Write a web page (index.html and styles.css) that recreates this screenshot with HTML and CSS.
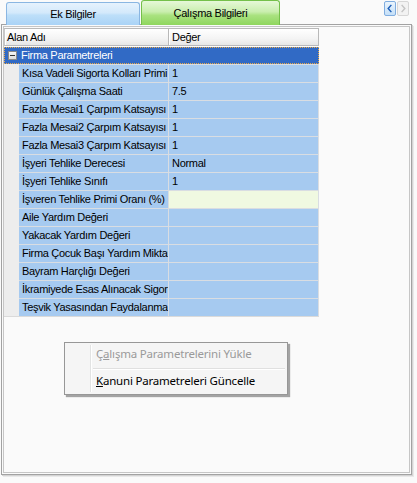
FILE: index.html
```html
<!DOCTYPE html>
<html lang="tr">
<head>
<meta charset="utf-8">
<title>Çalışma Bilgileri</title>
<link rel="stylesheet" href="styles.css">
</head>
<body>
<div class="tabstrip">
  <div class="tab tab-blue">Ek Bilgiler</div>
  <div class="tab tab-green">Çalışma Bilgileri</div>
  <div class="navs">
    <span class="nav nav-on"><svg width="11" height="13" viewBox="0 0 11 13"><path d="M7 2.5 L3.5 6.5 L7 10.5" fill="none" stroke="#1d5fb8" stroke-width="1.6"/></svg></span>
    <span class="nav nav-off"><svg width="11" height="13" viewBox="0 0 11 13"><path d="M4 2.5 L7.5 6.5 L4 10.5" fill="none" stroke="#c4c4c4" stroke-width="1.6"/></svg></span>
  </div>
</div>
<div class="panel">
  <div class="inner">
    <div class="grid">
      <div class="hdr">
        <div class="hcell hname">Alan Adı</div>
        <div class="hcell hval">Değer</div>
      </div>
      <div class="group">
        <span class="expander"></span>
        <span class="gtext">Firma Parametreleri</span>
      </div>
      <div class="row"><div class="ind"></div><div class="c name">Kısa Vadeli Sigorta Kolları Primi</div><div class="c val">1</div></div>
      <div class="row"><div class="ind"></div><div class="c name">Günlük Çalışma Saati</div><div class="c val">7.5</div></div>
      <div class="row"><div class="ind"></div><div class="c name">Fazla Mesai1 Çarpım Katsayısı</div><div class="c val">1</div></div>
      <div class="row"><div class="ind"></div><div class="c name">Fazla Mesai2 Çarpım Katsayısı</div><div class="c val">1</div></div>
      <div class="row"><div class="ind"></div><div class="c name">Fazla Mesai3 Çarpım Katsayısı</div><div class="c val">1</div></div>
      <div class="row"><div class="ind"></div><div class="c name">İşyeri Tehlike Derecesi</div><div class="c val">Normal</div></div>
      <div class="row"><div class="ind"></div><div class="c name">İşyeri Tehlike Sınıfı</div><div class="c val">1</div></div>
      <div class="row row-cur"><div class="ind"></div><div class="c name">İşveren Tehlike Primi Oranı (%)</div><div class="c val"></div></div>
      <div class="row"><div class="ind"></div><div class="c name">Aile Yardım Değeri</div><div class="c val"></div></div>
      <div class="row"><div class="ind"></div><div class="c name">Yakacak Yardım Değeri</div><div class="c val"></div></div>
      <div class="row"><div class="ind"></div><div class="c name">Firma Çocuk Başı Yardım Miktarı</div><div class="c val"></div></div>
      <div class="row"><div class="ind"></div><div class="c name">Bayram Harçlığı Değeri</div><div class="c val"></div></div>
      <div class="row"><div class="ind"></div><div class="c name">İkramiyede Esas Alınacak Sigorta Primi</div><div class="c val"></div></div>
      <div class="row"><div class="ind"></div><div class="c name">Teşvik Yasasından Faydalanma Oranı</div><div class="c val"></div></div>
    </div>
  </div>
</div>
<div class="menu">
  <div class="mitem first disabled">Ç<u>a</u>lışma Parametrelerini Yükle</div>
  <div class="msep"></div>
  <div class="mitem"><u>K</u>anuni Parametreleri Güncelle</div>
</div>
</body>
</html>
```
FILE: styles.css
```css
* { box-sizing: border-box; }
html, body { margin: 0; padding: 0; }
body {
  width: 417px;
  height: 483px;
  background: #fafafa;
  font-family: "Liberation Sans", Arial, sans-serif;
  font-size: 11px;
  letter-spacing: -0.3px;
  color: #000;
  position: relative;
  overflow: hidden;
}
.tabstrip {
  display: flex;
  align-items: flex-end;
  height: 25px;
  padding-left: 6px;
  position: relative;
  z-index: 2;
}
.tab {
  display: flex;
  align-items: center;
  justify-content: center;
  border-radius: 3px 3px 0 0;
  padding-bottom: 1px;
}
.tab-blue {
  width: 134px;
  height: 23px;
  border: 1px solid #8ab6e2;
  border-bottom: none;
  background: linear-gradient(#e6f2fd 0%, #d3e9fb 45%, #bddff9 55%, #aad3f6 100%);
}
.tab-green {
  width: 139px;
  height: 25px;
  margin-left: 1px;
  border: 1px solid #74c04a;
  border-bottom: none;
  background: linear-gradient(#e6f8d8 0%, #c9eeae 45%, #a9e27f 60%, #8fd65e 100%);
}
.navs {
  margin-left: auto;
  margin-right: 8px;
  align-self: flex-start;
  margin-top: 1px;
  display: flex;
  gap: 1px;
}
.nav {
  width: 12px;
  height: 15px;
  display: flex;
  align-items: center;
  justify-content: center;
  border-radius: 2px;
}
.nav-on {
  border: 1px solid #80addf;
  background: linear-gradient(#eaf4fd, #c5e0f8);
}
.nav-off {
  border: 1px solid #d6d6d6;
  background: #f2f2f2;
}
.panel {
  margin-top: -1px;
  margin-left: 1px;
  width: 411px;
  height: 451px;
  border: 1px solid #a2a2a2;
  padding: 1px;
  box-shadow: 1px 1px 0 #d4d4d4, 2px 2px 0 #e9e9e9;
  position: relative;
  z-index: 1;
  background: #fafafa;
}
.inner {
  height: 100%;
  border: 1px solid #c6c6c6;
  background: #fafafa;
}
.grid {
  width: 315px;
  margin-top: 1px;
  border-bottom: 1px solid #dadada;
}
.hdr {
  display: flex;
  height: 18px;
}
.hcell {
  height: 18px;
  line-height: 16px;
  padding-left: 2px;
  border: 1px solid #b9b9b9;
  border-left-color: #c8c8c8;
  background: linear-gradient(#ffffff 0%, #f4f4f4 60%, #e6e6e6 100%);
  box-shadow: inset 1px 1px 0 #fff;
}
.hname { width: 165px; }
.hval { width: 150px; border-left: none; padding-left: 3px; }
.group {
  margin-top: 1px;
  height: 17px;
  background: #316ac5;
  outline: 1px dotted #e8a94a;
  outline-offset: -1px;
  display: flex;
  align-items: center;
  color: #fff;
  line-height: 17px;
}
.expander {
  width: 9px;
  height: 9px;
  margin-left: 4px;
  margin-right: 4px;
  border: 1px solid #8a8a8a;
  background: linear-gradient(#f6f6f6, #dcdcdc);
  position: relative;
}
.expander::after {
  content: "";
  position: absolute;
  left: 1px;
  top: 3px;
  width: 5px;
  height: 1px;
  background: #333;
}
.row {
  display: flex;
  height: 18px;
  border-top: 1px solid #d9dde2;
}
.ind {
  width: 15px;
  background: #ededed;
  margin-top: -1px;
  height: 18px;
}
.c {
  height: 17px;
  line-height: 17px;
  background: #a6caf0;
  white-space: nowrap;
  overflow: hidden;
  border-right: 1px solid #d9dde2;
}
.name { width: 150px; padding-left: 3px; }
.val { width: 150px; padding-left: 3px; }
.row-cur .val { background: #f0f9e1; }
.menu {
  position: absolute;
  left: 64px;
  top: 342px;
  width: 224px;
  padding: 2px;
  border: 1px solid #979797;
  background: #f5f5f5;
  box-shadow: 2px 2px 1px rgba(0,0,0,0.35);
  font-family: "Noto Sans", "Open Sans", sans-serif;
  font-size: 11.5px;
  letter-spacing: -0.2px;
  z-index: 5;
}
.menu::before {
  content: "";
  position: absolute;
  left: 25px;
  top: 2px;
  bottom: 2px;
  width: 1px;
  background: #e2e3e3;
  box-shadow: 1px 0 0 #fff;
}
.mitem {
  height: 22px;
  line-height: 21px;
  padding-left: 29px;
  color: #000;
}
.mitem.first { line-height: 17px; }
.mitem.disabled { color: #9a9a9a; }
.msep {
  margin: 1px 0 1px 26px;
  height: 1px;
  background: #e0e0e0;
  box-shadow: 0 1px 0 #fff;
}
```
